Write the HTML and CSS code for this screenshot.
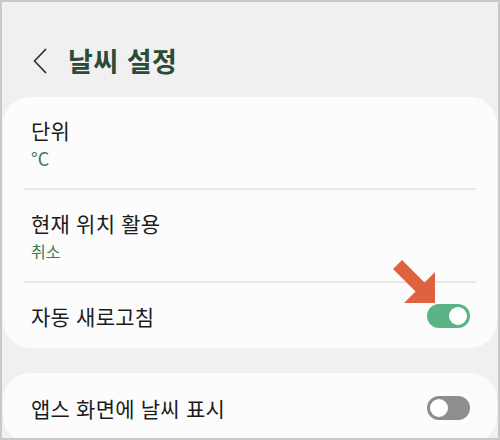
FILE: index.html
```html
<!DOCTYPE html>
<html lang="ko">
<head>
<meta charset="utf-8">
<link rel="stylesheet" href="styles.css">
</head>
<body>
<div class="screen">
  <header class="topbar">
    <svg class="back" width="14" height="26" viewBox="0 0 14 26"><polyline points="12.5,1.5 1.5,13 12.5,24.5" fill="none" stroke="#333" stroke-width="1.8" stroke-linecap="round" stroke-linejoin="round"/></svg>
    <h1 class="title">날씨 설정</h1>
  </header>
  <section class="card">
    <div class="row two">
      <div class="label">단위</div>
      <div class="sub unit">°C</div>
    </div>
    <div class="divider"></div>
    <div class="row two">
      <div class="label">현재 위치 활용</div>
      <div class="sub">취소</div>
    </div>
    <div class="divider"></div>
    <div class="row one">
      <div class="label">자동 새로고침</div>
      <div class="toggle on"><span class="knob"></span></div>
    </div>
  </section>
  <section class="card second">
    <div class="row one">
      <div class="label">앱스 화면에 날씨 표시</div>
      <div class="toggle off"><span class="knob"></span></div>
    </div>
  </section>
  <svg class="arrow" width="44" height="45" viewBox="0 0 44 45"><polygon points="9,0 31.5,22.5 42,12 42,43 11,43 22.5,31.5 0,9" fill="#df6240"/></svg>
</div>
</body>
</html>
```

FILE: styles.css
```css
* { box-sizing: border-box; }
html, body { margin: 0; padding: 0; }
body {
  font-family: "Noto Sans CJK KR", "Noto Sans", sans-serif;
  color: #1b1b1b;
}
.screen {
  position: relative;
  width: 500px;
  height: 440px;
  overflow: hidden;
  background: #f0f0f0;
  border: 2px solid #c9c9c9;
  padding: 0 1px;
}
.topbar {
  display: flex;
  align-items: center;
  height: 95px;
  padding-left: 30px;
  padding-top: 22px;
}
.back { display: block; margin-right: 21px; }
.title {
  margin: 0;
  font-size: 27px;
  font-weight: 700;
  color: #2a4b35;
  line-height: 36px;
  letter-spacing: 0.5px;
}
.card {
  background: #fcfcfc;
  border-radius: 27px;
}
.card.second { margin-top: 25px; }
.row {
  display: flex;
  padding: 0 28px;
}
.row.two {
  flex-direction: column;
  padding-top: 20px;
  padding-bottom: 20px;
}
.row.one {
  align-items: center;
  justify-content: space-between;
  height: 65px;
}
.card.second .row.one { height: 70px; }
.label {
  font-size: 21px;
  line-height: 26px;
  letter-spacing: 0.2px;
}
.sub {
  font-size: 16px;
  line-height: 20px;
  margin-top: 5px;
  color: #3c7a51;
}
.sub.unit { font-size: 18px; }
.divider {
  height: 2px;
  background: #e8e8e8;
  margin: 0 21px;
}
.toggle {
  position: relative;
  width: 43px;
  height: 24px;
  border-radius: 12px;
  margin-right: -1px;
}
.toggle.on { background: #5cb385; }
.toggle.off { background: #8e8e8e; }
.knob {
  position: absolute;
  top: 3px;
  width: 18px;
  height: 18px;
  border-radius: 50%;
  background: #fff;
}
.toggle.on .knob { right: 3px; }
.toggle.off .knob { left: 1px; top: 1px; width: 22px; height: 22px; border: 2px solid #8e8e8e; }
.arrow {
  position: absolute;
  left: 391px;
  top: 258px;
}
```
